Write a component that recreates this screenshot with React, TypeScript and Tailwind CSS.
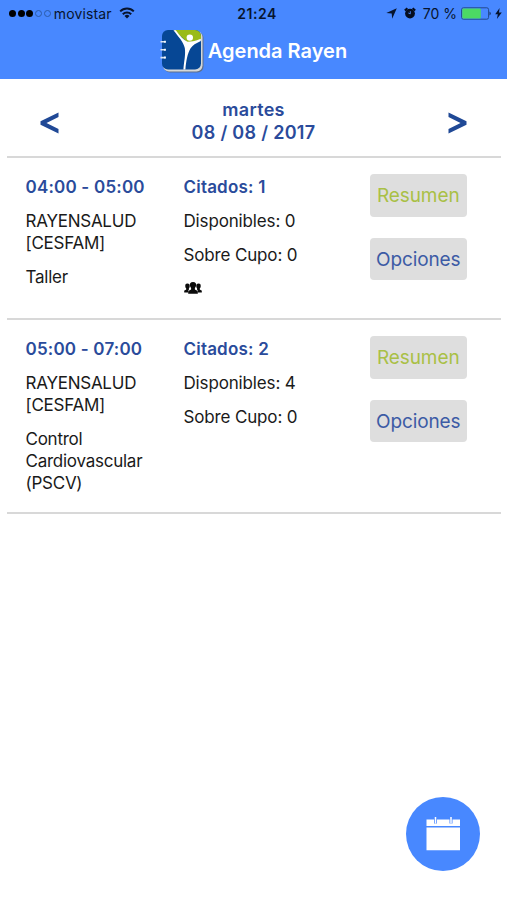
import { useState } from 'react';

type Block = {
  time: string;
  place: string[];
  activity: string[];
  booked: number;
  available: number;
  overbooked: number;
  group?: boolean;
};

const BLOCKS: Block[] = [
  {
    time: '04:00 - 05:00',
    place: ['RAYENSALUD', '[CESFAM]'],
    activity: ['Taller'],
    booked: 1,
    available: 0,
    overbooked: 0,
    group: true
  },
  {
    time: '05:00 - 07:00',
    place: ['RAYENSALUD', '[CESFAM]'],
    activity: ['Control', 'Cardiovascular', '(PSCV)'],
    booked: 2,
    available: 4,
    overbooked: 0
  }
];

function WifiIcon() {
  return (
    <svg width="16" height="12" viewBox="0 0 16 12" fill="none" stroke="#07142e" strokeWidth="2">
      <path d="M1.2 4.4a9.6 9.6 0 0 1 13.6 0" />
      <path d="M3.8 7.2a6 6 0 0 1 8.4 0" />
      <path d="M8 11.6 5.5 9a3.6 3.6 0 0 1 5 0z" fill="#07142e" stroke="none" />
    </svg>
  );
}

function AlarmIcon() {
  return (
    <svg width="12" height="12" viewBox="0 0 12 12">
      <circle cx="6" cy="6.6" r="4.9" fill="#050d1f" />
      <path d="M.8 3.6 3.4 1.2M8.6 1.2l2.6 2.4" stroke="#050d1f" strokeWidth="2" />
      <path d="M6.3 4.2v2.7L4.3 6" fill="none" stroke="#4888ff" strokeWidth=".9" />
    </svg>
  );
}

function Logo() {
  return (
    <svg width="44" height="44" viewBox="0 0 44 44">
      <rect x="4" y="3" width="39.5" height="40.5" rx="6" fill="#5f6f8c" />
      <rect x="3" y="2" width="39.5" height="40.5" rx="6" fill="#d4d7d8" />
      <rect x="2" y="1" width="39" height="39.5" rx="6" fill="#064795" />
      <path d="M14 1h21a6 6 0 0 1 6 6v3.5l-13 3.5z" fill="#9abb19" />
      <path d="M13.4 1.2h2.4C20 6.8 23.5 11 27.5 12.8c4.6 0 9-1.3 13.3-3v2.1c-4.8 2.3-8.3 4.2-10.2 7.4-3 5-4.5 12.4-5.2 21.2h-2c.6-8.6 2.4-14.5 1.4-21.5C23.6 13.2 18.4 7.6 13.4 1.2z" fill="#fff" />
      <circle cx="29.8" cy="8.6" r="3.2" fill="#fff" />
      <path d="M.5 12.7h5M.5 20.7h5M.5 28.6h5" stroke="#d9e3f1" strokeWidth="1.6" />
      <path d="M5 11.7v2M5 19.7v2M5 27.6v2" stroke="#fff" strokeWidth="1.6" />
    </svg>
  );
}

function GroupIcon() {
  return (
    <svg width="18" height="12" viewBox="0 0 18 12" fill="#0b0b0b">
      <path d="M3.4 1.6c1.9 0 2.5 1.1 2.3 2.8-.1 1-.5 1.5-.8 2v1.4l-.6.7v1.9H.2V8.900c0-.7 1-.9 2-1.500V6.400c-.4-.5-.8-1-.9-2-.2-1.700.3-2.800 2.100-2.800z" />
      <path d="M14.600 1.600c-1.900 0-2.500 1.100-2.300 2.800.1 1 .5 1.500.8 2v1.400l.6.700v1.900h4.100V8.900c0-.7-1-.9-2-1.500V6.400c.4-.5.8-1 .9-2 .2-1.700-.3-2.800-2.100-2.800z" />
      <path d="M9 0c2.500 0 3.300 1.400 3.100 3.500-.1 1.300-.8 2-1.200 2.600v1.400c1.200.7 2.900 1.100 2.900 2.200v2H4.200v-2c0-1.100 1.700-1.500 2.900-2.200V6.100c-.4-.6-1.100-1.300-1.200-2.600C5.700 1.400 6.500 0 9 0z" />
    </svg>
  );
}

function CalendarIcon() {
  return (
    <svg width="34" height="34" viewBox="0 0 34 34">
      <path d="M.5 2.500h33.500v6.500H.5zM.5 10.500h33.500v22.700H.5z" fill="#fff" />
      <path d="M9.500 1.500v5M25 1.500v5" stroke="#4888ff" strokeWidth="3" />
      <path d="M9.500 0v6.500M25 0v6.500" stroke="#fff" strokeWidth="1.500" />
    </svg>
  );
}

function StatusBar() {
  return (
    <div className="flex h-7 items-center justify-between pr-[5px] pb-[2px] pl-[9px] text-[14px] text-[#07142e]">
      <div className="flex w-[200px] items-center">
        <div className="mr-[3px] flex gap-[1.7px]">
          <i className="size-[7px] rounded-full bg-black" />
          <i className="size-[7px] rounded-full bg-black" />
          <i className="size-[7px] rounded-full bg-black" />
          <i className="size-[7px] rounded-full border border-[#2b5ba9]" />
          <i className="size-[7px] rounded-full border border-[#2b5ba9]" />
        </div>
        <span className="mr-[7px] tracking-[0.15px]">movistar</span>
        <WifiIcon />
      </div>
      <span className="pl-[3px] font-semibold tracking-[0.5px]">21:24</span>
      <div className="flex w-[200px] items-center justify-end">
        <svg className="mr-[7px]" width="11" height="11" viewBox="0 0 11 11">
          <path d="M10.8.3 6.2 10.8 5.7 5.5.3 5z" fill="#07142e" />
        </svg>
        <AlarmIcon />
        <span className="mr-[4px] ml-[7px]">70 %</span>
        <svg width="31" height="13" viewBox="0 0 31 13">
          <rect x=".6" y=".8" width="27" height="11.4" rx="1.8" fill="none" stroke="#23498c" />
          <rect x="1.3" y="1.5" width="18.5" height="10" rx="1" fill="#4cd964" />
          <path d="M28.6 4.5q2 2 0 4z" fill="#07142e" />
        </svg>
        <svg className="ml-[3px]" width="7" height="11" viewBox="0 0 7 11">
          <path d="M4.6 0 .2 6.2h2.6L1.900 11 6.800 4.400H4z" fill="#07142e" />
        </svg>
      </div>
    </div>
  );
}

function BlockRow({ block }: { block: Block }) {
  return (
    <section className="flex border-b-2 border-[#d8d8d8] pt-[18px] pb-[6px] text-[17px] leading-[22px] tracking-[-0.25px] text-[#1a1a1a]">
      <div className="w-[158px] pl-[18.5px]">
        <p className="mb-3 font-semibold tracking-[0.2px] whitespace-nowrap text-[#2a4b9b]">{block.time}</p>
        <p className="mb-3">
          {block.place.map((line) => (
            <span key={line} className="block">{line}</span>
          ))}
        </p>
        <p className="mb-3">
          {block.activity.map((line) => (
            <span key={line} className="block">{line}</span>
          ))}
        </p>
      </div>
      <div className="w-[186px] pl-[18.5px] tracking-[-0.15px]">
        <p className="mb-3 font-semibold tracking-[0.2px] text-[#2a4b9b]">Citados: {block.booked}</p>
        <p className="mb-3">Disponibles: {block.available}</p>
        <p className="mb-3">Sobre Cupo: {block.overbooked}</p>
        {block.group && (
          <div className="mb-3 flex h-[22px] items-center pb-[2px]">
            <GroupIcon />
          </div>
        )}
      </div>
      <div className="-mt-[2px] flex flex-col gap-[21px] pl-[18.5px] text-[19px] tracking-[-0.1px]">
        <button className="h-[42.5px] w-[97.5px] rounded bg-[#dedede] pt-[2px] text-[#a9c046]">Resumen</button>
        <button className="h-[42.5px] w-[97.5px] rounded bg-[#dedede] pt-[2px] text-[#3c5ba5]">Opciones</button>
      </div>
    </section>
  );
}

export default function App() {
  const [day, setDay] = useState(8);
  const date = new Date(2017, 7, day);
  const weekday = date.toLocaleDateString('es', { weekday: 'long' });
  const dd = String(date.getDate()).padStart(2, '0');
  const mm = String(date.getMonth() + 1).padStart(2, '0');

  return (
    <div className="relative h-[900px] w-[507px] overflow-hidden bg-white font-['Inter',sans-serif]">
      <header className="h-[79px] bg-[#4888ff]">
        <StatusBar />
        <div className="flex h-[46px] items-center justify-center gap-[4px]">
          <Logo />
          <h1 className="text-[20px] font-semibold text-white">Agenda Rayen</h1>
        </div>
      </header>

      <main className="mr-[6px] ml-[7px]">
        <nav className="flex h-[79px] items-center justify-between border-b-2 border-[#d8d8d8] pt-[7px] pr-[34px] pl-[33px] font-semibold text-[#2a4b9b]">
          <button className="mt-[3px]" aria-label="Anterior" onClick={() => setDay(day - 1)}>
            <svg width="20" height="22" viewBox="0 0 20 22" fill="#204996">
              <path d="M18.5.5v4.600L6.500 11l12 5.900v4.600L.5 12.700V9.300z" />
            </svg>
          </button>
          <div className="text-center text-[18px] leading-[23px] tracking-[0.3px]">
            <p>{weekday}</p>
            <p>{dd} / {mm} / {date.getFullYear()}</p>
          </div>
          <button className="mt-[3px]" aria-label="Siguiente" onClick={() => setDay(day + 1)}>
            <svg width="20" height="22" viewBox="0 0 20 22" fill="#204996">
              <path d="M1.500.5v4.600l12 5.900-12 5.900v4.600l18-8.800V9.300z" />
            </svg>
          </button>
        </nav>
        {BLOCKS.map((block) => (
          <BlockRow key={block.time} block={block} />
        ))}
      </main>

      <button aria-label="Calendario" className="absolute top-[797px] left-[406px] flex size-[74px] items-center justify-center rounded-full bg-[#4888ff]">
        <CalendarIcon />
      </button>
    </div>
  );
}
